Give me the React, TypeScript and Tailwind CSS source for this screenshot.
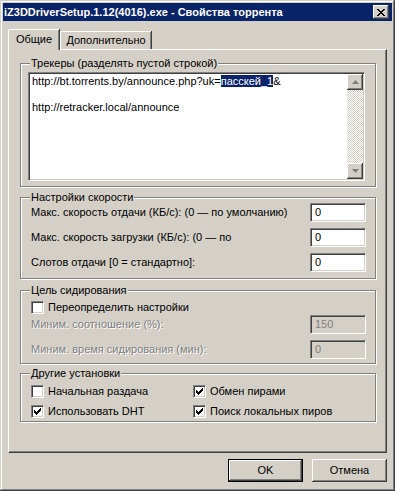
import { ReactNode } from "react";

const sunken =
	"border border-t-[#808080] border-l-[#808080] border-b-white border-r-white shadow-[inset_1px_1px_#404040,inset_-1px_-1px_#d4d0c8]";
const raised =
	"shadow-[inset_-1px_-1px_#404040,inset_1px_1px_#ffffff,inset_-2px_-2px_#808080,inset_2px_2px_#d4d0c8]";
const disabledText = "text-[#808080] [text-shadow:1px_1px_#ffffff]";

function Group({ title, className, children }: { title: string; className: string; children?: ReactNode }) {
	return (
		<div className={`relative border border-[#808080] shadow-[inset_1px_1px_#ffffff,1px_1px_#ffffff] ${className}`}>
			<span className="absolute -top-[7px] left-[9px] bg-[#d4d0c8] px-[1px] leading-[13px]">{title}</span>
			{children}
		</div>
	);
}

function Field({ value, disabled }: { value: string; disabled?: boolean }) {
	return (
		<div className={`${sunken} w-[56px] h-[19px] p-[1px] flex`}>
			<div className={`flex-1 flex items-center pl-[3px] ${disabled ? "bg-[#d4d0c8] text-[#808080]" : "bg-white"}`}>{value}</div>
		</div>
	);
}

function Check({ label, checked }: { label: string; checked?: boolean }) {
	return (
		<div className="flex items-center h-[13px]">
			<div className={`${sunken} w-[13px] h-[13px] p-[1px] shrink-0`}>
				<div className="w-full h-full bg-white flex items-center justify-center">
					{checked && (
						<svg width="9" height="9" viewBox="0 0 9 9">
							<path d="M1 3v3h1v1h1v1h1V7h1V6h1V5h1V4h1V1H7v1H6v1H5v1H4v1H3V4H2V3z" fill="#000" />
						</svg>
					)}
				</div>
			</div>
			<span className="ml-[4px] leading-[13px]">{label}</span>
		</div>
	);
}

function Arrow({ up }: { up?: boolean }) {
	return (
		<div className={`${raised} bg-[#d4d0c8] w-[16px] h-[16px] flex items-center justify-center`}>
			<svg width="7" height="4" viewBox="0 0 7 4">
				<path d={up ? "M3.5 0L7 4H0z" : "M0 0h7L3.5 4z"} fill="#808080" />
			</svg>
		</div>
	);
}

export default function App() {
	return (
		<div className="w-[395px] h-[491px] bg-[#d4d0c8] p-[3px] flex flex-col text-[11px] text-black font-['Liberation_Sans',Arial,sans-serif] shadow-[inset_-1px_-1px_#404040,inset_1px_1px_#d4d0c8,inset_-2px_-2px_#808080,inset_2px_2px_#ffffff]">
			{/* title bar */}
			<div className="h-[18px] bg-[#0a246a] flex items-center justify-between pl-[1px] pr-[3px]">
				<span className="text-white font-bold leading-[18px]">iZ3DDriverSetup.1.12(4016).exe - Свойства торрента</span>
				<div className={`${raised} bg-[#d4d0c8] w-[16px] h-[14px] flex items-center justify-center`}>
					<svg width="8" height="7" viewBox="0 0 8 7">
						<path d="M0 0h2v1h1v1h2V1h1V0h2v1H7v1H6v1H5v1h1v1h1v1h1v1H6V6H5V5H3v1H2v1H0V6h1V5h1V4h1V3H2V2H1V1H0z" fill="#000" />
					</svg>
				</div>
			</div>

			{/* tabs */}
			<div className="mt-[8px] ml-[5px] h-[20px] flex items-end">
				<div className="relative z-10 -mb-px h-[21px] w-[51px] bg-[#d4d0c8] border-t border-l border-white rounded-tl-[2px] shadow-[inset_-1px_0_#808080,1px_0_#404040] flex items-center justify-center pb-[2px]">
					Общие
				</div>
				<div className="h-[18px] w-[91px] ml-[1px] border-t border-l border-white rounded-tl-[2px] shadow-[inset_-1px_0_#808080,1px_0_#404040] flex items-center justify-center">
					Дополнительно
				</div>
			</div>

			{/* panel */}
			<div className="mx-[5px] h-[404px] border border-t-white border-l-white border-r-[#404040] border-b-[#404040] shadow-[inset_-1px_-1px_#808080] flex flex-col">
				<Group title="Трекеры (разделять пустой строкой)" className="mt-[13px] ml-[11px] w-[356px] h-[124px] pl-[7px] pt-[8px]">
					<div className={`${sunken} w-[337px] h-[109px] p-[1px] flex`}>
						<div className="flex-1 bg-white pl-[2px] pt-[1px] leading-[13px]">
							<div>
								http://bt.torrents.by/announce.php?uk=<span className="bg-[#0a246a] text-white">пасскей_1</span>&amp;
							</div>
							<div>&nbsp;</div>
							<div>http://retracker.local/announce</div>
						</div>
						<div className="w-[16px] flex flex-col">
							<Arrow up />
							<div className="flex-1 bg-[repeating-conic-gradient(#d4d0c8_0_25%,#ffffff_0_50%)] bg-[length:2px_2px]" />
							<Arrow />
						</div>
					</div>
				</Group>

				<Group title="Настройки скорости" className="mt-[10px] ml-[11px] w-[356px] h-[82px] pl-[10px] pr-[9px] pt-[5px] flex flex-col gap-[6px]">
					<div className="flex items-center justify-between">
						<span>Макс. скорость отдачи (КБ/с): (0 — по умолчанию)</span>
						<Field value="0" />
					</div>
					<div className="flex items-center justify-between">
						<span>Макс. скорость загрузки (КБ/с): (0 — по</span>
						<Field value="0" />
					</div>
					<div className="flex items-center justify-between">
						<span>Слотов отдачи [0 = стандартно]:</span>
						<Field value="0" />
					</div>
				</Group>

				<Group title="Цель сидирования" className="mt-[11px] ml-[11px] w-[356px] h-[74px] pl-[10px] pr-[9px] pt-[10px] flex flex-col">
					<Check label="Переопределить настройки" />
					<div className="flex items-center justify-between mt-px">
						<span className={disabledText}>Миним. соотношение (%):</span>
						<Field value="150" disabled />
					</div>
					<div className="flex items-center justify-between mt-[6px]">
						<span className={disabledText}>Миним. время сидирования (мин):</span>
						<Field value="0" disabled />
					</div>
				</Group>

				<Group title="Другие установки" className="mt-[9px] ml-[11px] w-[356px] h-[49px] pl-[10px] pt-[11px] grid grid-cols-[162px_1fr] auto-rows-[13px] gap-y-[7px] content-start">
					<Check label="Начальная раздача" />
					<Check label="Обмен пирами" checked />
					<Check label="Использовать DHT" checked />
					<Check label="Поиск локальных пиров" checked />
				</Group>
			</div>

			{/* buttons */}
			<div className="mt-[6px] mx-[5px] flex justify-end gap-[9px]">
				<button className={`w-[75px] h-[23px] bg-[#d4d0c8] border border-black ${raised}`}>OK</button>
				<button className={`w-[75px] h-[23px] bg-[#d4d0c8] ${raised}`}>Отмена</button>
			</div>
		</div>
	);
}
